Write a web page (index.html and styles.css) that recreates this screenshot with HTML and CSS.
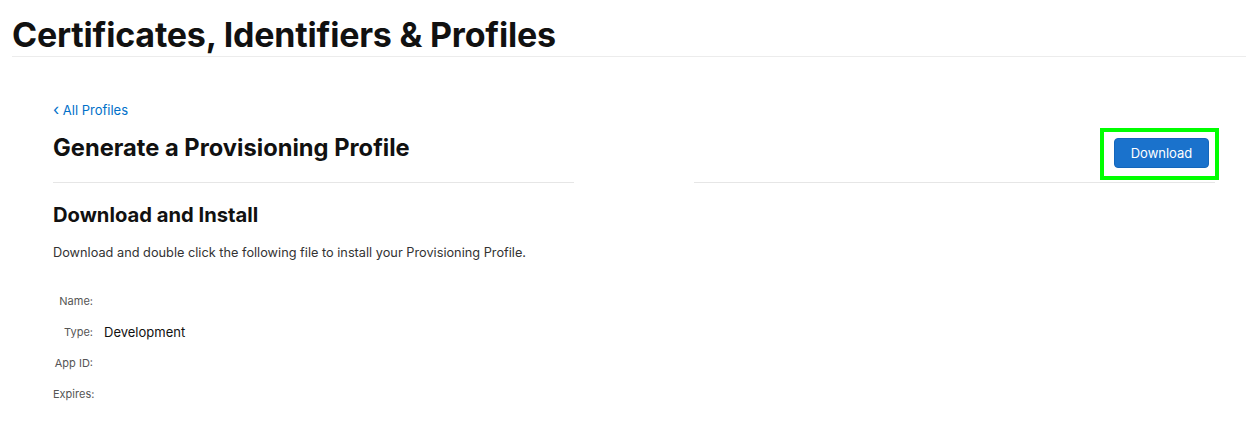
FILE: index.html
```html
<!DOCTYPE html>
<html lang="en">
<head>
<meta charset="utf-8">
<title>Certificates, Identifiers &amp; Profiles</title>
<link rel="stylesheet" href="styles.css">
</head>
<body>
<header class="site-header">
  <h1 class="site-title">Certificates, Identifiers &amp; Profiles</h1>
</header>
<main class="page">
  <a class="back-link" href="#"><span class="chev">‹</span> All Profiles</a>
  <div class="head-row">
    <div class="head-cell">
      <h2 class="page-title">Generate a Provisioning Profile</h2>
    </div>
    <div class="head-cell head-actions">
      <div class="highlight">
        <button class="btn-primary" type="button">Download</button>
      </div>
    </div>
  </div>
  <h3 class="section-title">Download and Install</h3>
  <p class="lead">Download and double click the following file to install your Provisioning Profile.</p>
  <dl class="details">
    <dt>Name:</dt><dd></dd>
    <dt>Type:</dt><dd>Development</dd>
    <dt>App ID:</dt><dd></dd>
    <dt>Expires:</dt><dd></dd>
  </dl>
</main>
</body>
</html>
```

FILE: styles.css
```css
* { box-sizing: border-box; }
html, body { margin: 0; padding: 0; background: #fff; }
body {
  font-family: Inter, "Liberation Sans", Arial, sans-serif;
  color: #1d1d1f;
  width: 1246px;
}
.site-header {
  margin-left: 12px;
  border-bottom: 1px solid #ececec;
}
.site-title {
  margin: 0;
  padding-top: 13px;
  height: 56px;
  font-size: 34px;
  line-height: 44px;
  font-weight: 700;
  letter-spacing: -0.2px;
  color: #111;
}
.page {
  padding: 0 31px 0 53px;
}
.back-link {
  display: block;
  margin-top: 44px;
  font-size: 13px;
  line-height: 16px;
  color: #0070c9;
  text-decoration: none;
}
.chev { font-size: 16px; line-height: 16px; }
.head-row {
  display: grid;
  grid-template-columns: 1fr 1fr;
  column-gap: 120px;
  align-items: end;
  margin-top: 10px;
}
.head-cell {
  border-bottom: 1px solid #e6e6e6;
}
.page-title {
  margin: 0;
  padding-bottom: 19px;
  font-size: 23.7px;
  line-height: 30px;
  font-weight: 700;
  color: #111;
}
.head-actions {
  display: flex;
  justify-content: flex-end;
  padding-bottom: 2px;
}
.highlight {
  border: 4px solid #00ff00;
  padding: 6px 6px 8px 10px;
  margin-right: -4px;
}
.btn-primary {
  display: block;
  width: 95px;
  height: 30px;
  border: 1px solid #1466bb;
  border-radius: 4px;
  background: #1a72cc;
  color: #fff;
  font-family: inherit;
  font-size: 13px;
  padding: 0;
}
.section-title {
  margin: 20px 0 0;
  font-size: 20.2px;
  line-height: 24px;
  font-weight: 700;
  color: #111;
}
.lead {
  margin: 17px 0 0;
  font-size: 12.75px;
  line-height: 18px;
  color: #333;
}
.details {
  display: grid;
  grid-template-columns: 40px 1fr;
  column-gap: 11px;
  grid-auto-rows: 31px;
  align-items: center;
  margin: 23px 0 0;
}
.details dt {
  text-align: right;
  font-size: 11px;
  color: #555;
  white-space: nowrap;
}
.details dd {
  margin: 0;
  font-size: 13px;
  color: #111;
}
```
